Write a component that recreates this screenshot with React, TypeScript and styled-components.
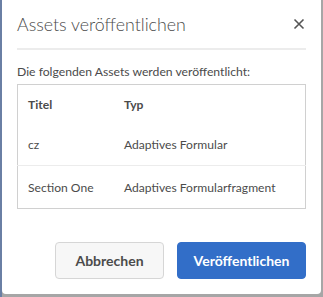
import styled, { createGlobalStyle } from "styled-components";

const GlobalStyle = createGlobalStyle`
  html, body {
    margin: 0;
    padding: 0;
  }
  body {
    font-family: Lato, "Open Sans", "Liberation Sans", sans-serif;
    color: #4b4b4b;
  }
`;

const Backdrop = styled.div`
  width: 323px;
  height: 297px;
  background: linear-gradient(to right, #6a7fa4 2px, #a6a6a6 2px);
  overflow: hidden;
`;

const Dialog = styled.div`
  margin-left: 2px;
  width: 319px;
  height: 294px;
  background: #ffffff;
  border-radius: 0 0 4px 4px;
  box-sizing: border-box;
  padding: 0 15px 0 15px;
  display: flex;
  flex-direction: column;
`;

const Header = styled.div`
  display: flex;
  align-items: center;
  justify-content: space-between;
  height: 48px;
  border-bottom: 2px solid #ececec;
`;

const Title = styled.h2`
  margin: 0;
  font-size: 17.8px;
  font-weight: 300;
  color: #4b4b4b;
  padding-bottom: 1px;
`;

const CloseButton = styled.button`
  border: none;
  background: none;
  padding: 0;
  margin-right: 1px;
  width: 12px;
  height: 12px;
  display: flex;
  cursor: pointer;
`;

const Intro = styled.p`
  margin: 13px 0 4px 0;
  font-size: 12.2px;
  line-height: 17px;
  color: #4b4b4b;
`;

const Table = styled.table`
  width: 289px;
  border: 1px solid #d0d0d0;
  border-collapse: collapse;
  font-size: 12.1px;
  color: #4b4b4b;
`;

const HeadCell = styled.th`
  text-align: left;
  font-weight: 700;
  height: 38px;
  padding: 0 0 0 10px;
  &:first-child {
    width: 86px;
  }
`;

const Row = styled.tr<{ last?: boolean }>`
  border-bottom: ${(props) => (props.last ? "none" : "1px solid #ececec")};
`;

const Cell = styled.td`
  height: 42px;
  padding: 0 0 0 10px;
`;

const Footer = styled.div`
  display: flex;
  justify-content: flex-end;
  gap: 13px;
  margin-top: 33px;
`;

const Button = styled.button<{ primary?: boolean }>`
  height: 37px;
  box-sizing: border-box;
  border-radius: 4px;
  font-family: Lato, "Open Sans", "Liberation Sans", sans-serif;
  font-size: 14px;
  font-weight: 700;
  cursor: pointer;
  border: 1px solid ${(props) => (props.primary ? "#326ec8" : "#d6d6d6")};
  background: ${(props) => (props.primary ? "#326ec8" : "#f7f7f7")};
  color: ${(props) => (props.primary ? "#ffffff" : "#4b4b4b")};
  width: ${(props) => (props.primary ? "129px" : "109px")};
`;

const assets = [
  { title: "cz", type: "Adaptives Formular" },
  { title: "Section One", type: "Adaptives Formularfragment" },
];

const App = () => {
  return (
    <Backdrop>
      <GlobalStyle />
      <Dialog>
        <Header>
          <Title>Assets veröffentlichen</Title>
          <CloseButton aria-label="Schließen">
            <svg width="12" height="12" viewBox="0 0 12 12">
              <path
                d="M1.5 1.5 L10.5 10.5 M10.5 1.5 L1.5 10.5"
                stroke="#555"
                strokeWidth="1.6"
              />
            </svg>
          </CloseButton>
        </Header>
        <Intro>Die folgenden Assets werden veröffentlicht:</Intro>
        <Table>
          <thead>
            <tr>
              <HeadCell>Titel</HeadCell>
              <HeadCell>Typ</HeadCell>
            </tr>
          </thead>
          <tbody>
            {assets.map((a, i) => (
              <Row key={a.title} last={i === assets.length - 1}>
                <Cell>{a.title}</Cell>
                <Cell>{a.type}</Cell>
              </Row>
            ))}
          </tbody>
        </Table>
        <Footer>
          <Button>Abbrechen</Button>
          <Button primary>Veröffentlichen</Button>
        </Footer>
      </Dialog>
    </Backdrop>
  );
};

export default App;
